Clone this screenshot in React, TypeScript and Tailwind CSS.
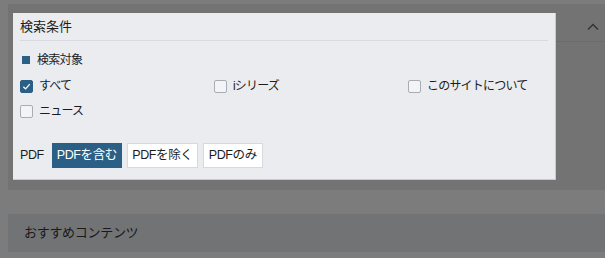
const jp = { fontFamily: '"Liberation Sans", "Noto Sans CJK JP", sans-serif' };

function Box({ checked }: { checked?: boolean }) {
  if (checked) {
    return (
      <span className="w-[13px] h-[13px] rounded-[2px] bg-[#2b5f86] border border-[#2b5f86] flex items-center justify-center shrink-0">
        <svg width="9" height="9" viewBox="0 0 10 10">
          <polyline points="1.5,5.2 4,7.6 8.6,2.4" fill="none" stroke="#fff" strokeWidth="1.4" />
        </svg>
      </span>
    );
  }
  return <span className="w-[13px] h-[13px] rounded-[2px] bg-[#f3f4f6] border border-[#a7adb3] shrink-0" />;
}

function Option({ label, checked }: { label: string; checked?: boolean }) {
  return (
    <label className="flex items-center gap-[6px] h-[16px] text-[12px] tracking-[-0.8px] text-[#1c1c1c]">
      <Box checked={checked} />
      <span>{label}</span>
    </label>
  );
}

export default function App() {
  return (
    <div className="w-[605px] h-[258px] overflow-hidden bg-[#7c7c7c] pt-[4px] pl-[8px]" style={jp}>
      {/* 検索条件 accordion (dimmed), with highlighted panel */}
      <div className="h-[186px] bg-[#737374] pt-[9px] pl-[5px] flex">
        <div className="w-[543px] h-[167px] bg-[#eaecf0] border-r border-b border-[#c8cacd] px-[7px]">
          <div className="h-[28px] flex items-center text-[13px] text-[#1c1c1c] border-b border-[#d7dbe0]">
            検索条件
          </div>

          <div className="mt-[11px] flex items-center h-[16px] gap-[7px] pl-[2px] text-[12px] tracking-[-0.7px] text-[#1c1c1c]">
            <span className="w-[8px] h-[8px] bg-[#2b5f86]" />
            <span>検索対象</span>
          </div>

          <div className="mt-[10px] grid grid-cols-[194px_194px_1fr] gap-y-[9px]">
            <Option label="すべて" checked />
            <Option label="iシリーズ" />
            <Option label="このサイトについて" />
            <Option label="ニュース" />
          </div>

          <div className="mt-[24px] flex items-center gap-[5px] text-[12.5px] tracking-[-0.4px]">
            <span className="text-[#1c1c1c] mr-[3px]">PDF</span>
            <button className="h-[25px] w-[70px] bg-[#2b5f86] border border-[#2b5f86] text-white">PDFを含む</button>
            <button className="h-[25px] w-[71px] bg-white border border-[#d6d9dd] text-[#1c1c1c]">PDFを除く</button>
            <button className="h-[25px] w-[60px] bg-white border border-[#d6d9dd] text-[#1c1c1c]">PDFのみ</button>
          </div>
        </div>

        <div className="flex-1">
          <div className="h-[28px] flex items-center justify-end pr-[6px]">
            <svg width="12" height="8" viewBox="0 0 12 8">
              <polyline points="1,6.5 6,1.5 11,6.5" fill="none" stroke="#333" strokeWidth="1.4" />
            </svg>
          </div>
          <div className="h-px bg-[#6b6b6c]" />
        </div>
      </div>

      <div className="h-[24px]" />

      <div className="h-[38px] bg-[#727374] flex items-center pl-[16px] text-[13px] tracking-[-0.3px] text-[#1a1a1a]">
        おすすめコンテンツ
      </div>
    </div>
  );
}
